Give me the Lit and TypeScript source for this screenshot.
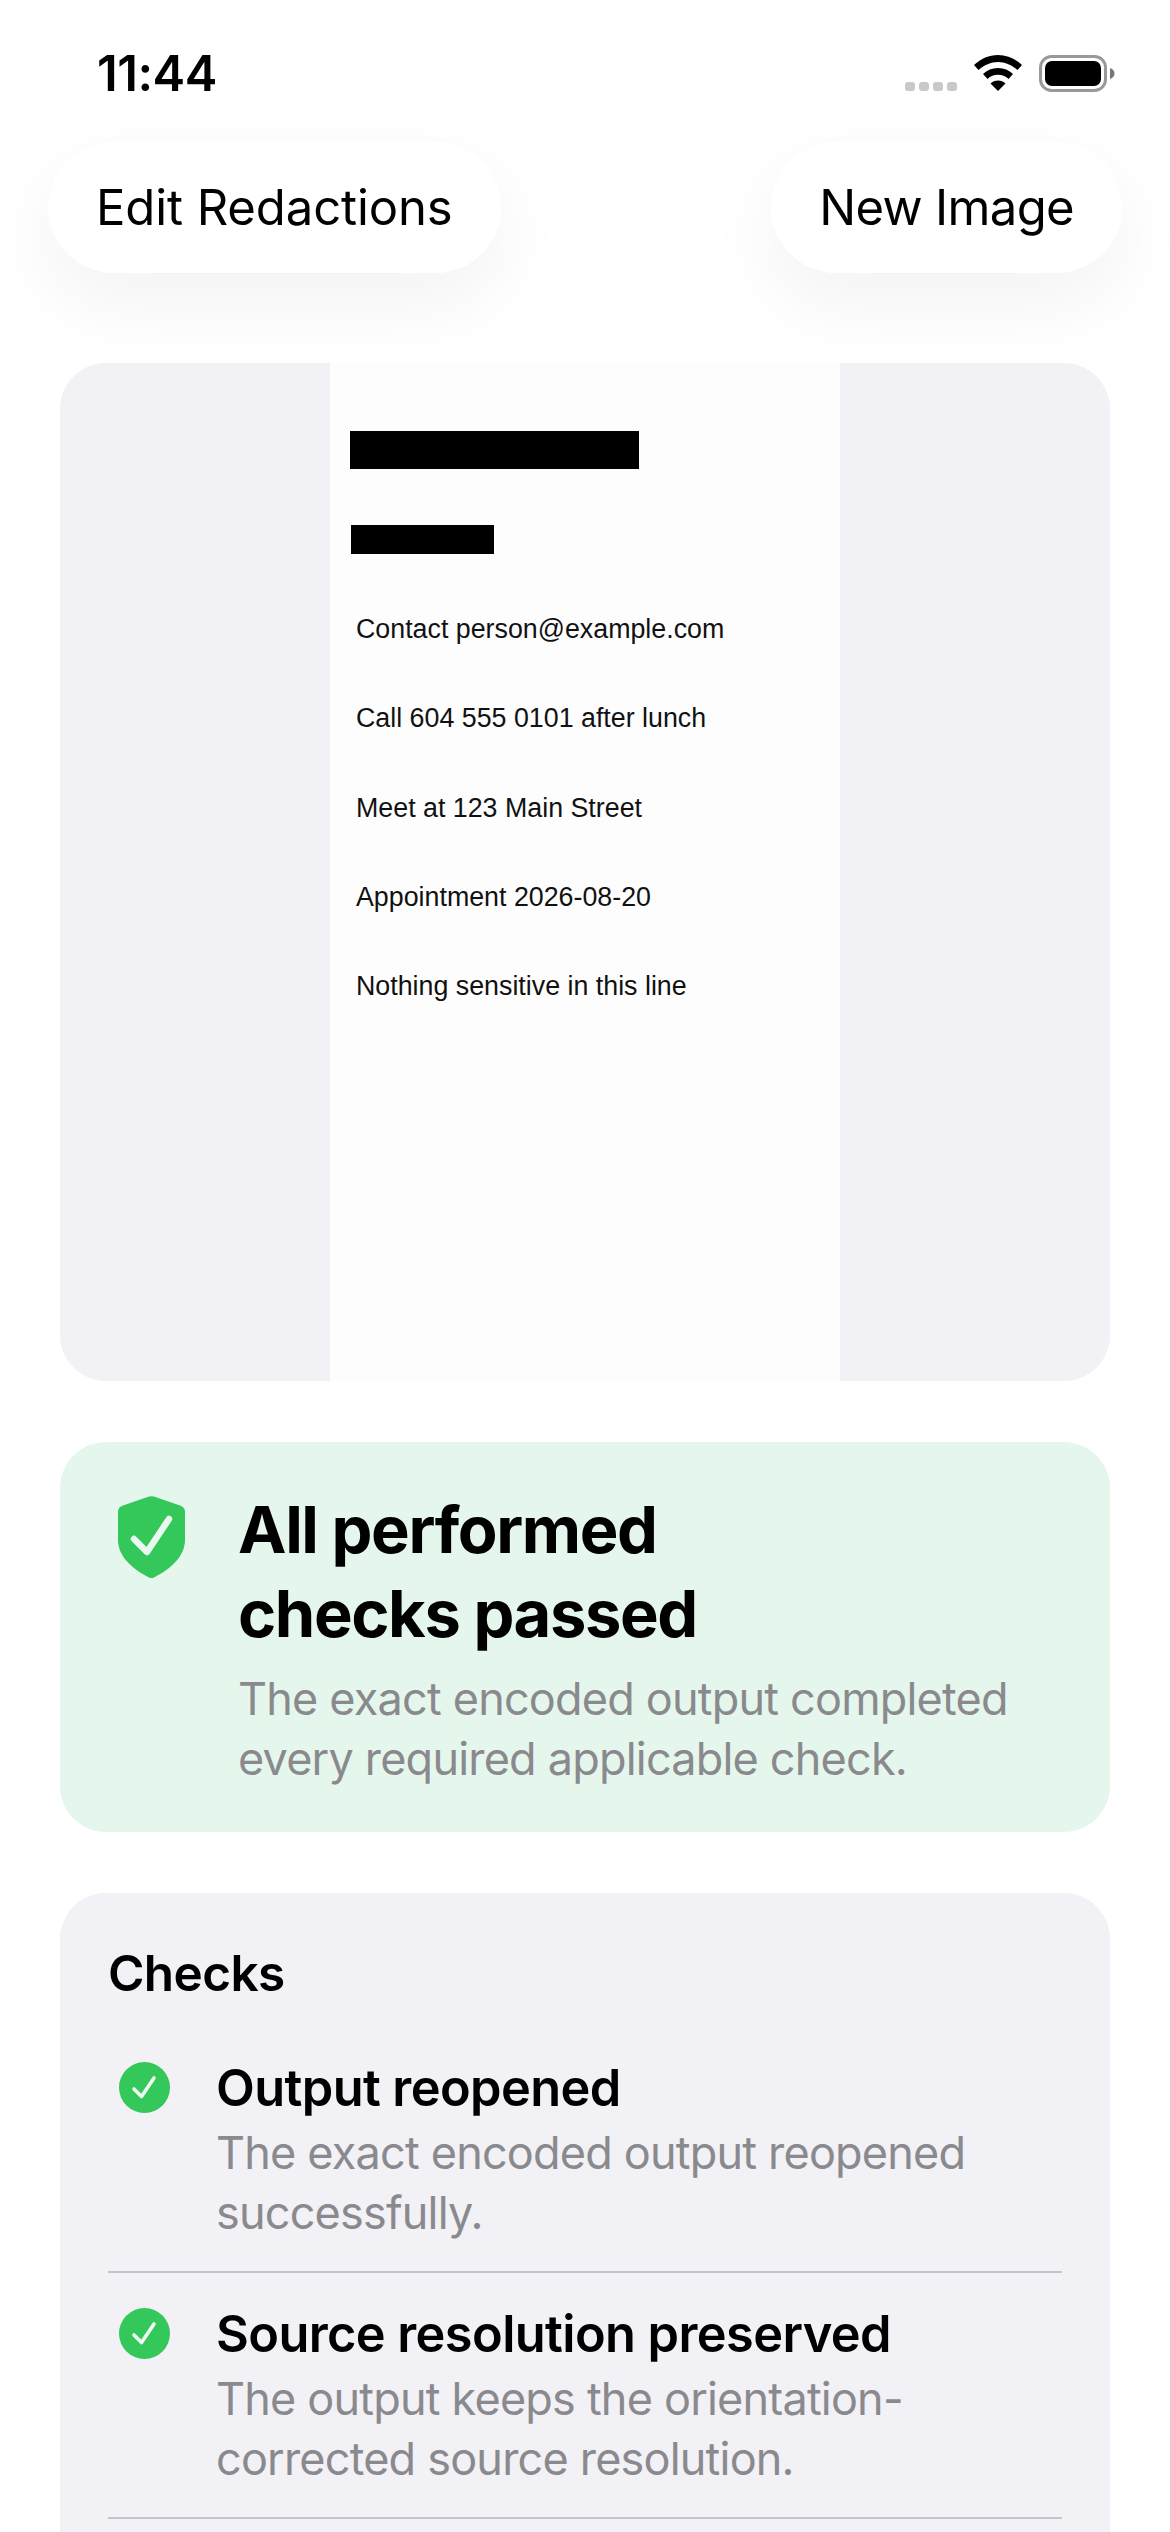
import { LitElement, html, css } from "lit";
import { customElement } from "lit/decorators.js";

const checks = [
  ["Output reopened", "The exact encoded output reopened successfully."],
  ["Source resolution preserved", "The output keeps the orientation-corrected source resolution."],
];
const lines = [
  "Contact person@example.com",
  "Call 604 555 0101 after lunch",
  "Meet at 123 Main Street",
  "Appointment 2026-08-20",
  "Nothing sensitive in this line",
];

@customElement("app-root")
export class AppRoot extends LitElement {
  static styles = css`
    :host { display: block; width: 1170px; height: 2532px; overflow: hidden; background: #fff; color: #000;
      font-family: Inter, "Noto Sans", sans-serif; }
    .status { height: 142px; box-sizing: border-box; padding: 48px 55px 0 97px; display: flex; justify-content: space-between; align-items: flex-start; }
    .time { font-size: 49px; font-weight: 600; line-height: 52px; letter-spacing: -0.5px; }
    .sys { display: flex; align-items: flex-start; gap: 17px; padding-top: 7px; }
    .dots { display: flex; gap: 4px; padding-top: 27px; }
    .dots i { width: 10px; height: 9px; border-radius: 3px; background: #c9c9c9; }
    .toolbar { display: flex; justify-content: space-between; padding: 0 48px; }
    .pill { height: 131px; box-sizing: border-box; border-radius: 66px; background: #fff; display: flex; align-items: center; padding: 0 48px; font-size: 49px; letter-spacing: -0.1px; box-shadow: 0 30px 80px rgba(0,0,0,.05); }
    .pill.b { letter-spacing: -0.65px; }
    .card { margin: 0 60px; border-radius: 46px; }
    .image { margin-top: 90px; height: 1018px; background: #f1f1f6; display: flex; justify-content: center; overflow: hidden; }
    .doc { width: 510px; background: #fdfdfd; box-sizing: border-box; padding: 68px 0 0 20px; }
    .r1 { width: 289px; height: 38px; background: #000; }
    .r2 { width: 143px; height: 29px; background: #000; margin: 56px 0 31px 1px; }
    .line { font-family: "Liberation Sans", Arial, sans-serif; font-size: 26.800px; line-height: 89.300px; padding-left: 6px; color: #111; white-space: nowrap; }
    .ok { margin-top: 61px; height: 390px; box-sizing: border-box; background: #e5f7ec; display: flex; padding: 46px 0 0 58px; gap: 53px; }
    .ok svg { flex: none; margin-top: 8px; }
    .ok h1 { margin: 0; font-size: 65px; font-weight: 700; line-height: 84px; letter-spacing: -1.400px; }
    .ok p { margin: 13px 0 0; font-size: 45px; line-height: 60px; color: #8a8a8e; letter-spacing: -0.800px; }
    .checks { margin-top: 61px; min-height: 800px; background: #f1f1f6; padding: 49px 48px 0; }
    .checks h2 { margin: 0 0 53px; font-size: 49.500px; line-height: 62px; font-weight: 600; letter-spacing: -0.6px; }
    .row { display: flex; gap: 46px; padding: 0 0 28px 11px; border-bottom: 2px solid #c4c4ca; }
    .row + .row { padding-top: 30px; }
    .row svg { flex: none; margin-top: 5px; }
    .row h3 { margin: 0; font-size: 50.500px; font-weight: 600; line-height: 62px; letter-spacing: -0.6px; }
    .row p { margin: 4px 0 0; font-size: 45px; line-height: 60px; color: #8a8a8e; letter-spacing: -0.800px; }
    .row > div { flex: 1; }
  `;

  private tick() {
    return html`<svg width="51" height="51" viewBox="0 0 51 51"><circle cx="25.500" cy="25.500" r="25.500" fill="#34c759"/><path d="M15 27l7.500 7.500L35 16" fill="none" stroke="#eefbf2" stroke-width="3.600" stroke-linecap="round" stroke-linejoin="round"/></svg>`;
  }

  render() {
    return html`
      <div class="status">
        <div class="time">11:44</div>
        <div class="sys">
          <div class="dots"><i></i><i></i><i></i><i></i></div>
          <svg width="48" height="36" viewBox="0 0 48 36"><path d="M24 0C15 0 7 3.600 0 10l4.500 5C10 10 17 7 24 7s14 3 19.500 8L48 10C41 3.600 33 0 24 0z" fill="#000"/><path d="M24 13c-6 0-11 2.200-15 6l4.500 5c3-2.800 6.500-4.200 10.500-4.200S31.500 21.200 34.500 24L39 19c-4-3.800-9-6-15-6z" fill="#000"/><path d="M24 25.500c-3 0-5.500 1-7.500 3L24 36l7.500-7.500c-2-2-4.500-3-7.500-3z" fill="#000"/></svg>
          <svg width="76" height="37" viewBox="0 0 76 37"><rect x="1.500" y="1.500" width="65" height="34" rx="11" fill="none" stroke="#999" stroke-width="3"/><rect x="6" y="6" width="56" height="25" rx="7" fill="#000"/><path d="M71 13c3 1 4.500 3 4.500 5.500S74 23 71 24z" fill="#777"/></svg>
        </div>
      </div>
      <div class="toolbar">
        <div class="pill">Edit Redactions</div>
        <div class="pill b">New Image</div>
      </div>
      <div class="card image">
        <div class="doc">
          <div class="r1"></div>
          <div class="r2"></div>
          ${lines.map((l) => html`<div class="line">${l}</div>`)}
        </div>
      </div>
      <div class="card ok">
        <svg width="67" height="82" viewBox="0 0 67 82"><path d="M31 .6a8 8 0 0 1 5 0L62 9.500c3 1 5 3 5 6V44c0 16-14 29-31 37.400a6 6 0 0 1-5 0C14 73 0 60 0 44V15.500c0-3 2-5 5-6z" fill="#34c759"/><path d="M16 43l13 13 22-33" fill="none" stroke="#e9f9ef" stroke-width="6.500" stroke-linecap="round" stroke-linejoin="round"/></svg>
        <div>
          <h1>All performed<br />checks passed</h1>
          <p>The exact encoded output completed<br />every required applicable check.</p>
        </div>
      </div>
      <div class="card checks">
        <h2>Checks</h2>
        ${checks.map(([t, d]) => html`<div class="row">${this.tick()}<div><h3>${t}</h3><p>${d}</p></div></div>`)}
      </div>
    `;
  }
}
